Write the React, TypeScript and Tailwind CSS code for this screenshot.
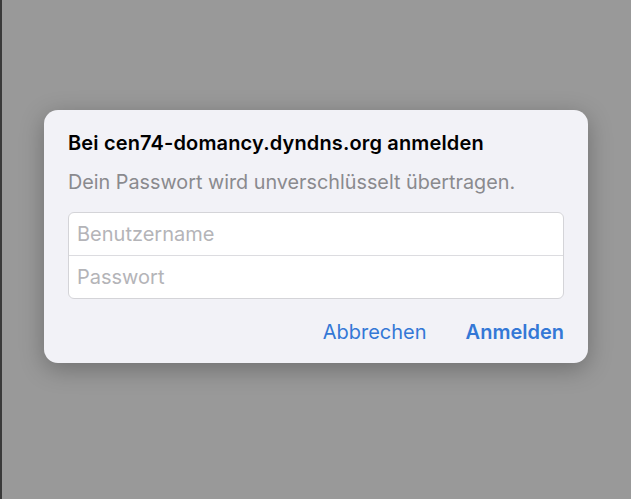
export default function App() {
  return (
    <div
      className="flex h-[499px] w-[631px] bg-[#999999]"
      style={{ fontFamily: 'Inter, "Noto Sans", sans-serif' }}
    >
      {/* dark edge along the left side */}
      <div className="h-full w-[2px] bg-[#3a3a3a]" />
      <div className="pl-[42px] pt-[110px]">
        <div className="flex h-[253px] w-[544px] flex-col rounded-[14px] bg-[#f2f2f7] px-6 pt-[21px] shadow-[0_6px_24px_rgba(0,0,0,0.28)]">
          <h1 className="text-[20px] font-semibold leading-6 tracking-[0.15px] text-black">
            Bei cen74-domancy.dyndns.org anmelden
          </h1>
          <p className="mt-[15px] text-[19.8px] leading-6 text-[#8a8a8e]">
            Dein Passwort wird unverschlüsselt übertragen.
          </p>
          <div className="mt-[18px] flex flex-col overflow-hidden rounded-[6px] border border-[#d4d4d8] bg-white">
            <input
              placeholder="Benutzername"
              className="h-[43px] border-b border-[#dcdce0] px-[8px] text-[20px] text-black outline-none placeholder:text-[#b4b4b8]"
            />
            <input
              type="password"
              placeholder="Passwort"
              className="h-[42px] px-[8px] text-[20px] text-black outline-none placeholder:text-[#b4b4b8]"
            />
          </div>
          <div className="mt-[21px] flex justify-end gap-[39px] text-[20px] leading-6 text-[#3478d6]">
            <button>Abbrechen</button>
            <button className="font-semibold">Anmelden</button>
          </div>
        </div>
      </div>
    </div>
  )
}
